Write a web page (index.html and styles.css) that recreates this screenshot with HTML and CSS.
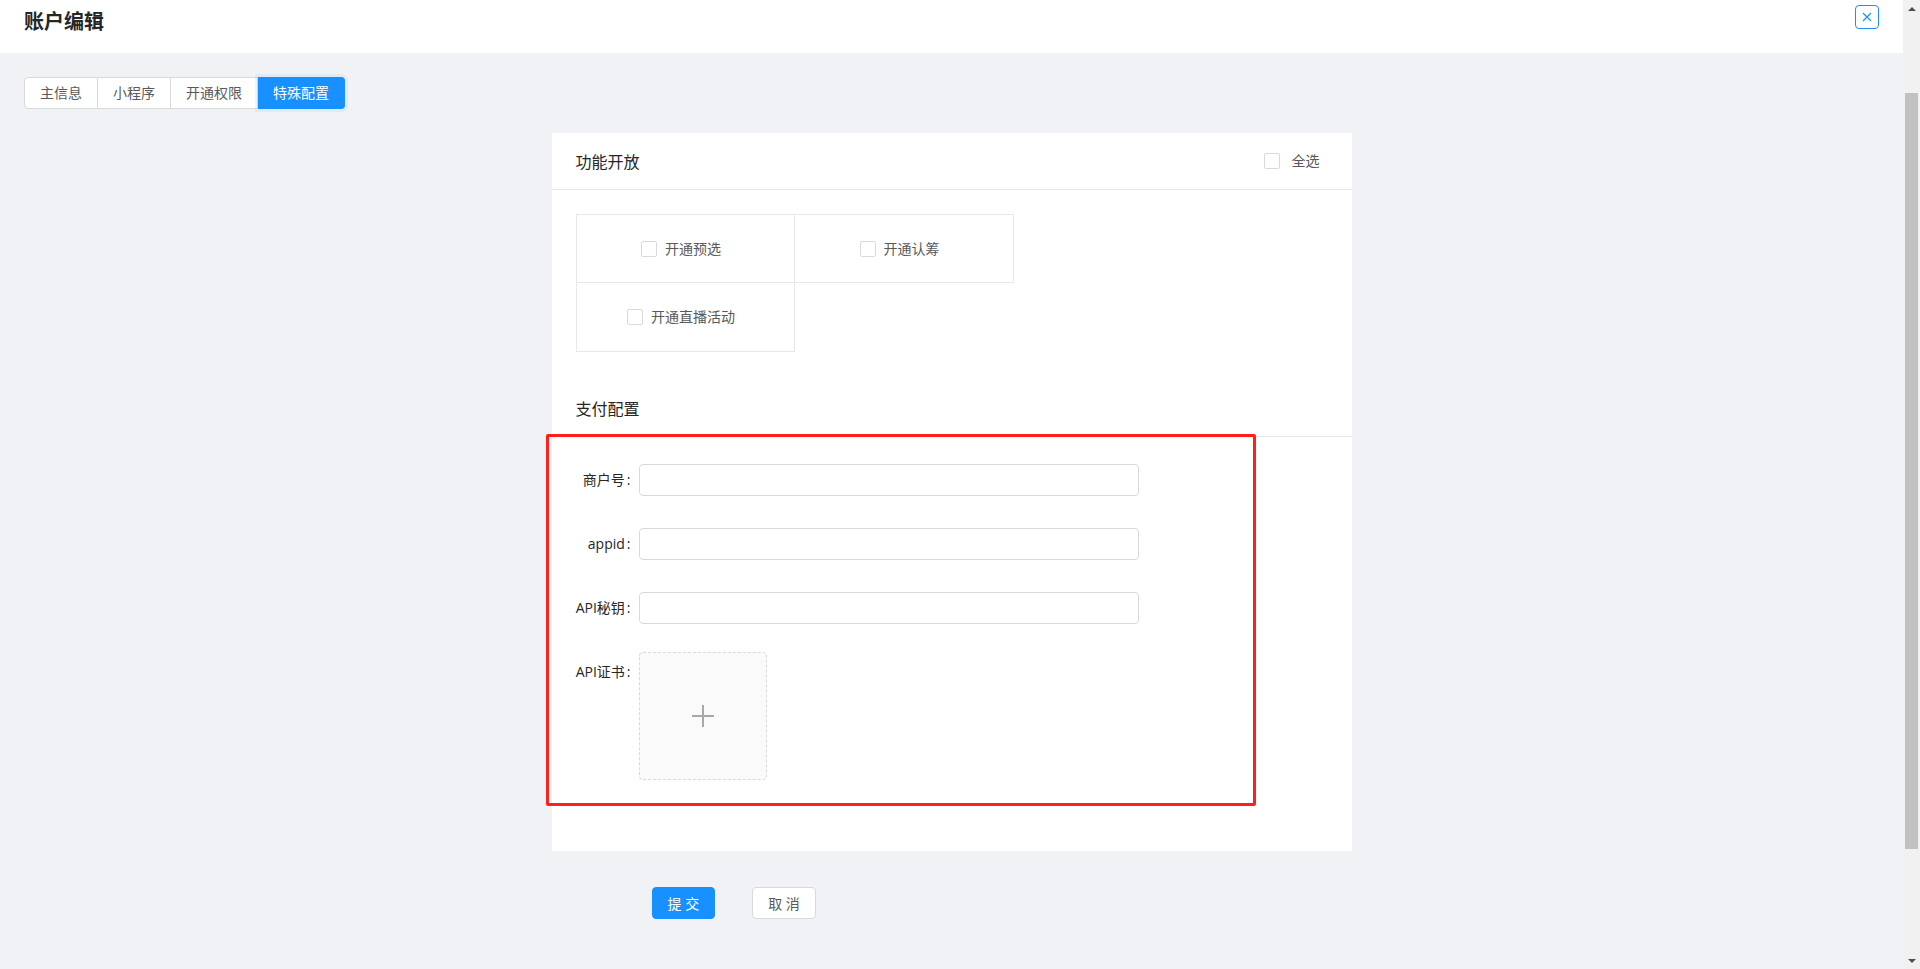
FILE: index.html
```html
<!DOCTYPE html>
<html lang="zh-CN">

<head>
    <meta charset="UTF-8">
    <meta name="viewport" content="width=device-width, initial-scale=1.0">
    <title>账户编辑</title>
    <link rel="stylesheet" href="styles.css">
</head>

<body>
    <div class="window">
        <div class="page">
            <div class="header">
                <h1 class="title">账户编辑</h1>
                <button class="close-btn" type="button">
                    <svg width="10" height="10" viewBox="0 0 10 10">
                        <path d="M1 1L9 9M9 1L1 9" stroke="#1890ff" stroke-width="1.2" fill="none" />
                    </svg>
                </button>
            </div>

            <div class="main">
                <div class="tabs">
                    <span class="tab">主信息</span>
                    <span class="tab">小程序</span>
                    <span class="tab">开通权限</span>
                    <span class="tab active">特殊配置</span>
                </div>

                <div class="card">
                    <div class="card-head">
                        <span>功能开放</span>
                        <label class="check check-all">
                            <span class="check-box"></span>
                            <span class="check-text">全选</span>
                        </label>
                    </div>
                    <div class="card-body">
                        <div class="feature-grid">
                            <div class="feature-cell">
                                <label class="check"><span class="check-box"></span><span class="check-text">开通预选</span></label>
                            </div>
                            <div class="feature-cell">
                                <label class="check"><span class="check-box"></span><span class="check-text">开通认筹</span></label>
                            </div>
                            <div class="feature-cell">
                                <label class="check"><span class="check-box"></span><span class="check-text">开通直播活动</span></label>
                            </div>
                        </div>
                    </div>

                    <div class="card-head">
                        <span>支付配置</span>
                    </div>
                    <div class="card-body pay-body">
                        <div class="form-item">
                            <label class="form-label">商户号</label>
                            <input class="input" type="text">
                        </div>
                        <div class="form-item">
                            <label class="form-label">appid</label>
                            <input class="input" type="text">
                        </div>
                        <div class="form-item">
                            <label class="form-label">API秘钥</label>
                            <input class="input" type="text">
                        </div>
                        <div class="form-item">
                            <label class="form-label">API证书</label>
                            <div class="upload">
                                <svg width="22" height="22" viewBox="0 0 22 22">
                                    <path d="M11 0V22M0 11H22" stroke="#a8a8a8" stroke-width="2" fill="none" />
                                </svg>
                            </div>
                        </div>
                    </div>

                    <!-- red annotation frame -->
                    <div class="mark"></div>
                </div>

                <div class="actions">
                    <button class="btn btn-primary" type="button">提 交</button>
                    <button class="btn" type="button">取 消</button>
                </div>
            </div>
        </div>

        <div class="scrollbar">
            <span class="sb-arrow sb-up"></span>
            <div class="sb-track">
                <div class="sb-thumb"></div>
            </div>
            <span class="sb-arrow sb-down"></span>
        </div>
    </div>
</body>

</html>
```

FILE: styles.css
```css
* {
    box-sizing: border-box;
}

html,
body {
    margin: 0;
    height: 100%;
    overflow: hidden;
}

body {
    font-family: "Open Sans", "Noto Sans CJK SC", sans-serif;
    font-size: 14px;
    color: #595959;
    background: #f0f2f5;
}

.window {
    display: flex;
    height: 100vh;
}

.page {
    flex: 1;
    min-width: 0;
    height: 100%;
    overflow: hidden;
}

/* header */
.header {
    height: 53px;
    padding: 0 24px;
    background: #fff;
    display: flex;
    justify-content: space-between;
    align-items: flex-start;
}

.title {
    margin: 8px 0 0;
    font-size: 20px;
    line-height: 28px;
    font-weight: 700;
    color: #262626;
}

.close-btn {
    margin-top: 5px;
    width: 24px;
    height: 24px;
    padding: 0;
    border: 1px solid #1890ff;
    border-radius: 4px;
    background: #fff;
    display: flex;
    align-items: center;
    justify-content: center;
}

.main {
    padding: 24px;
}

/* tabs */
.tabs {
    display: inline-flex;
}

.tab {
    height: 32px;
    line-height: 30px;
    padding: 0 15px;
    border: 1px solid #d9d9d9;
    border-left-width: 0;
    background: #fff;
    color: #595959;
}

.tab:first-child {
    border-left-width: 1px;
    border-radius: 4px 0 0 4px;
}

.tab:last-child {
    border-radius: 0 4px 4px 0;
}

.tab.active {
    background: #1890ff;
    border-color: #1890ff;
    color: #fff;
    box-shadow: 0 0 0 3px rgba(24, 144, 255, 0.08);
}

/* card */
.card {
    position: relative;
    width: 800px;
    margin: 24px auto 0;
    background: #fff;
    border-radius: 2px;
}

.card-head {
    height: 57px;
    padding: 0 24px;
    border-bottom: 1px solid #e8e8e8;
    display: flex;
    align-items: center;
    justify-content: space-between;
    font-size: 16px;
    color: #262626;
}

.card-body {
    padding: 24px 24px 28px;
}

.check {
    display: inline-flex;
    align-items: center;
}

.check-box {
    width: 16px;
    height: 16px;
    border: 1px solid #d9d9d9;
    border-radius: 2px;
    background: #fff;
}

.check-text {
    padding: 0 8px;
    font-size: 14px;
    line-height: 22px;
    color: #595959;
}

.check-all .check-text {
    padding-left: 12px;
}

.feature-grid {
    display: grid;
    grid-template-columns: 219px 219px;
    grid-auto-rows: 69px;
}

.feature-cell {
    display: flex;
    align-items: center;
    justify-content: center;
    border-right: 1px solid #e8e8e8;
    border-bottom: 1px solid #e8e8e8;
}

.feature-cell:nth-child(odd) {
    border-left: 1px solid #e8e8e8;
}

.feature-cell:nth-child(-n+2) {
    border-top: 1px solid #e8e8e8;
}

/* form */
.pay-body {
    padding: 23px 24px 71px;
}

.form-item {
    display: flex;
    align-items: flex-start;
    margin-bottom: 24px;
}

.form-item:last-child {
    margin-bottom: 0;
}

.form-label {
    width: 63px;
    flex-shrink: 0;
    text-align: right;
    line-height: 40px;
    white-space: nowrap;
    color: #262626;
}

.form-label::after {
    content: ":";
    margin: 0 8px 0 2px;
}

.input {
    display: block;
    width: 500px;
    height: 32px;
    margin: 4px 0;
    padding: 4px 11px;
    border: 1px solid #d9d9d9;
    border-radius: 4px;
    background: #fff;
    font: inherit;
    color: #595959;
}

.upload {
    width: 128px;
    height: 128px;
    border: 1px dashed #d9d9d9;
    border-radius: 4px;
    background: #fafafa;
    display: flex;
    align-items: center;
    justify-content: center;
}

.mark {
    position: absolute;
    left: -6px;
    top: 301px;
    width: 710px;
    height: 372px;
    border: 3px solid #ff1f1f;
    border-radius: 2px;
    pointer-events: none;
}

/* buttons */
.actions {
    width: 800px;
    margin: 36px auto 0;
    padding-left: 100px;
    display: flex;
}

.btn {
    height: 32px;
    padding: 0 15px;
    border: 1px solid #d9d9d9;
    border-radius: 4px;
    background: #fff;
    font: inherit;
    color: #595959;
}

.btn + .btn {
    margin-left: 37px;
}

.btn-primary {
    background: #1890ff;
    border-color: #1890ff;
    color: #fff;
}

/* page scrollbar */
.scrollbar {
    width: 17px;
    flex-shrink: 0;
    background: #f1f1f1;
    display: flex;
    flex-direction: column;
}

.sb-arrow {
    height: 17px;
    display: flex;
    align-items: center;
    justify-content: center;
}

.sb-arrow::before {
    content: "";
    border-left: 4px solid transparent;
    border-right: 4px solid transparent;
}

.sb-up::before {
    border-bottom: 4px solid #505050;
}

.sb-down::before {
    border-top: 4px solid #505050;
}

.sb-track {
    flex: 1;
}

.sb-thumb {
    margin: 76px 2px 0;
    height: 756px;
    background: #c1c1c1;
}
```
